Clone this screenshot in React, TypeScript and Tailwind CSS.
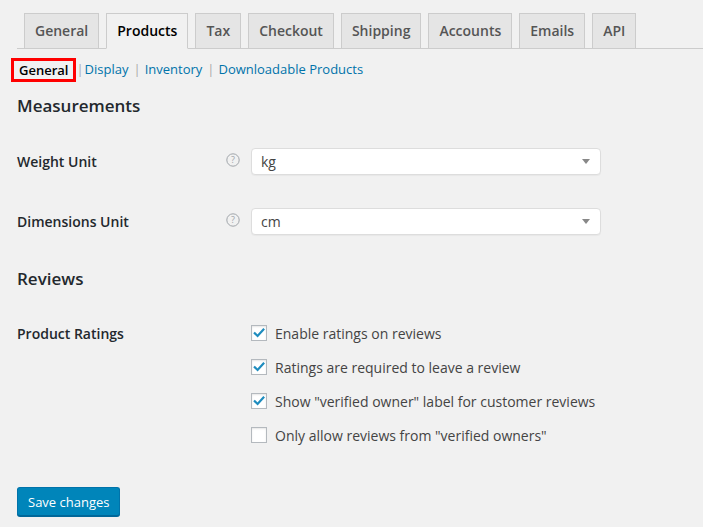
import { useState } from 'react';

const tabs = ['General', 'Products', 'Tax', 'Checkout', 'Shipping', 'Accounts', 'Emails', 'API'];
const sections = ['General', 'Display', 'Inventory', 'Downloadable Products'];

const ratingOptions = [
  { label: 'Enable ratings on reviews', checked: true },
  { label: 'Ratings are required to leave a review', checked: true },
  { label: 'Show "verified owner" label for customer reviews', checked: true },
  { label: 'Only allow reviews from "verified owners"', checked: false },
];

const HelpTip = () => (
  <svg width="14" height="14" viewBox="0 0 14 14" className="block">
    <circle cx="7" cy="7" r="6.2" fill="none" stroke="#a0a5aa" strokeWidth="1" />
    <text x="7" y="10.2" textAnchor="middle" fontSize="9" fontFamily="Open Sans, sans-serif" fill="#a0a5aa">
      ?
    </text>
  </svg>
);

const SelectBox = ({ value }: { value: string }) => (
  <div className="flex h-[27px] w-[350px] items-center justify-between rounded-[4px] border border-[#ddd] bg-white pl-[9px] pr-[10px] shadow-[0_1px_1px_rgba(0,0,0,0.04)]">
    <span className="text-[14px] text-[#444]">{value}</span>
    <span className="h-0 w-0 border-x-[4px] border-t-[5px] border-x-transparent border-t-[#888]" />
  </div>
);

const Checkbox = ({ checked, onToggle }: { checked: boolean; onToggle: () => void }) => (
  <button
    type="button"
    onClick={onToggle}
    className="flex h-[16px] w-[16px] items-center justify-center border border-[#b4b9be] bg-white shadow-[inset_0_1px_2px_rgba(0,0,0,0.1)]"
  >
    {checked && (
      <svg width="14" height="14" viewBox="0 0 14 14">
        <path d="M2.8 7.2 L5.6 10 L11.4 3.6" fill="none" stroke="#1e8cbe" strokeWidth="2.2" strokeLinecap="square" />
      </svg>
    )}
  </button>
);

export default function App() {
  const [active, setActive] = useState('Products');
  const [ratings, setRatings] = useState(ratingOptions.map((o) => o.checked));

  return (
    <div className="h-[527px] w-full overflow-hidden bg-[#f1f1f1] font-['Open_Sans',sans-serif] text-[14px] text-[#444]">
      {/* Tabs */}
      <div className="ml-[17px] flex border-b border-[#ccc] pt-[13px]">
        {tabs.map((tab) => (
          <button
            key={tab}
            type="button"
            onClick={() => setActive(tab)}
            className={
              tab === active
                ? 'ml-[7px] -mb-px border border-[#ccc] border-b-[#f1f1f1] bg-[#f1f1f1] px-[10px] py-[5px] text-[14px] font-semibold leading-[24px] text-black'
                : 'ml-[7px] -mb-px border border-[#ccc] bg-[#e5e5e5] px-[10px] py-[5px] text-[14px] font-semibold leading-[24px] text-[#555]'
            }
          >
            {tab}
          </button>
        ))}
      </div>

      {/* Sub sections */}
      <div className="ml-[11px] mt-[9px] flex h-[24px] items-center text-[13px]">
        {sections.map((s, i) => (
          <span key={s} className="flex items-center">
            {i === 1 && <span className="mr-[1px] text-[#aaa]">|</span>}
            {i > 1 && <span className="ml-[5px] mr-[4px] text-[#aaa]">|</span>}
            {i === 0 ? (
              <span className="border-[3px] border-[#f00] px-[5px] font-semibold leading-[18px] text-black">{s}</span>
            ) : (
              <a href="#" className="text-[#0073aa]">
                {s}
              </a>
            )}
          </span>
        ))}
      </div>

      <div className="pl-[17px]">
        <h2 className="mt-[12px] text-[17px] font-semibold leading-[24px] text-[#23282d]">Measurements</h2>

        <div className="mt-[30px] flex h-[26px] items-center">
          <label className="w-[209px] font-semibold text-[#23282d]">Weight Unit</label>
          <div className="w-[25px] -translate-y-[1px]">
            <HelpTip />
          </div>
          <SelectBox value="kg" />
        </div>

        <div className="mt-[34px] flex h-[26px] items-center">
          <label className="w-[209px] font-semibold text-[#23282d]">Dimensions Unit</label>
          <div className="w-[25px] -translate-y-[1px]">
            <HelpTip />
          </div>
          <SelectBox value="cm" />
        </div>

        <h2 className="mt-[33px] text-[17px] font-semibold leading-[24px] text-[#23282d]">Reviews</h2>

        <div className="mt-[25px] flex">
          <label className="flex h-[34px] w-[234px] items-center font-semibold text-[#23282d]">Product Ratings</label>
          <div className="flex flex-col">
            {ratingOptions.map((o, i) => (
              <div key={o.label} className="flex h-[34px] items-center gap-[8px]">
                <Checkbox
                  checked={ratings[i]}
                  onToggle={() => setRatings(ratings.map((v, j) => (j === i ? !v : v)))}
                />
                <span className="text-[14px] text-[#444]">{o.label}</span>
              </div>
            ))}
          </div>
        </div>

        <button
          type="button"
          className="mt-[35px] h-[29px] rounded-[3px] border border-[#0073aa] border-b-[#006799] bg-[#0085ba] px-[10px] text-[13px] leading-[26px] text-white shadow-[0_1px_0_#006799]"
        >
          Save changes
        </button>
      </div>
    </div>
  );
}
